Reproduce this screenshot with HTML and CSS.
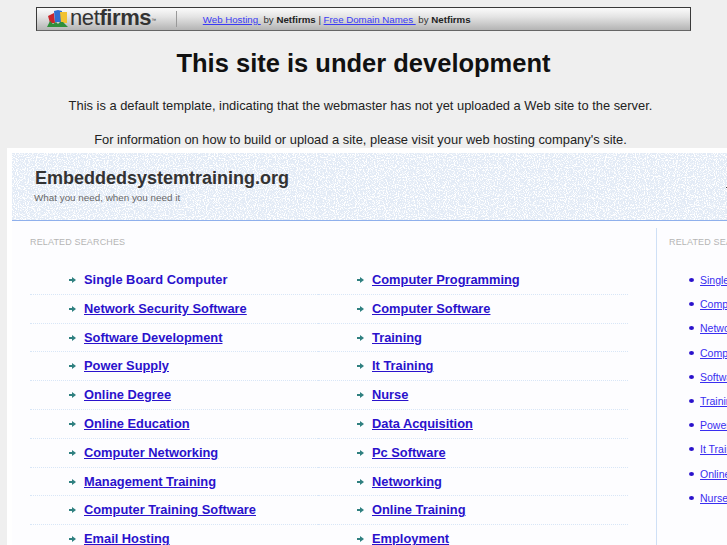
FILE: index.html
```html
<!DOCTYPE html>
<html lang="en">
<head>
<meta charset="utf-8">
<title>Embeddedsystemtraining.org</title>
<link rel="stylesheet" href="styles.css">
</head>
<body>
<div class="topbar">
  <div class="logo">
    <svg class="logo-mark" width="22" height="18" viewBox="0 0 22 18" aria-hidden="true">
      <path d="M1 6 L7 3 L8 13 L3 13 Z" fill="#c8262c"/>
      <path d="M7 1 L11 0 L15 1 L14 12 L8 12 Z" fill="#2f6fd0"/>
      <path d="M13 2 L20 2 L20 13 L14 13 Z" fill="#f2c230"/>
      <path d="M0 17 L3 11 L6 14 L9 12 L11 14 L13 12 L16 12 L21 17 Z" fill="#2f8f3a"/>
    </svg>
    <span class="logo-net">net</span><span class="logo-firms">firms</span><span class="logo-tm">™</span>
  </div>
  <div class="topbar-sep"></div>
  <div class="topbar-links">
    <a href="#">Web Hosting </a> by <b>Netfirms</b> | <a href="#">Free Domain Names </a> by <b>Netfirms</b>
  </div>
</div>
<h1 class="title">This site is under development</h1>
<p class="intro intro-first">This is a default template, indicating that the webmaster has not yet uploaded a Web site to the server.</p>
<p class="intro intro-second">For information on how to build or upload a site, please visit your web hosting company's site.</p>

<div class="panel">
  <header class="panel-head">
    <svg class="speckle" aria-hidden="true">
      <filter id="speckle-noise" x="0" y="0" width="100%" height="100%" color-interpolation-filters="sRGB">
        <feTurbulence type="fractalNoise" baseFrequency="0.9" numOctaves="1" seed="4"/>
        <feColorMatrix values="0 0 0 0 1  0 0 0 0 1  0 0 0 0 1  10 0 0 0 -5"/>
      </filter>
      <rect width="100%" height="100%" filter="url(#speckle-noise)"/>
    </svg>
    <div class="domain">Embeddedsystemtraining.org</div>
    <div class="tagline">What you need, when you need it</div>
    <span class="head-mark"></span>
  </header>
  <div class="panel-body">
    <section class="main-col">
      <h2 class="section-label">RELATED SEARCHES</h2>
      <ul class="link-grid">
        <li><a href="#" class="plain">Single Board Computer</a></li>
        <li><a href="#">Computer Programming</a></li>
        <li><a href="#">Network Security Software</a></li>
        <li><a href="#">Computer Software</a></li>
        <li><a href="#">Software Development</a></li>
        <li><a href="#">Training</a></li>
        <li><a href="#">Power Supply</a></li>
        <li><a href="#">It Training</a></li>
        <li><a href="#">Online Degree</a></li>
        <li><a href="#">Nurse</a></li>
        <li><a href="#">Online Education</a></li>
        <li><a href="#">Data Acquisition</a></li>
        <li><a href="#">Computer Networking</a></li>
        <li><a href="#">Pc Software</a></li>
        <li><a href="#">Management Training</a></li>
        <li><a href="#">Networking</a></li>
        <li><a href="#">Computer Training Software</a></li>
        <li><a href="#">Online Training</a></li>
        <li><a href="#">Email Hosting</a></li>
        <li><a href="#">Employment</a></li>
      </ul>
    </section>
    <aside class="side-col">
      <h2 class="section-label">RELATED SEARCHES</h2>
      <ul class="side-list">
        <li><a href="#">Single Board Computer</a></li>
        <li><a href="#">Computer Programming</a></li>
        <li><a href="#">Network Security</a></li>
        <li><a href="#">Computer Software</a></li>
        <li><a href="#">Software Development</a></li>
        <li><a href="#">Training</a></li>
        <li><a href="#">Power Supply</a></li>
        <li><a href="#">It Training</a></li>
        <li><a href="#">Online Degree</a></li>
        <li><a href="#">Nurse</a></li>
      </ul>
    </aside>
  </div>
</div>
</body>
</html>
```
FILE: styles.css
```css
* { box-sizing: border-box; }
html, body { margin: 0; padding: 0; height: 545px; overflow: hidden; }
body {
  width: 727px;
  background: #efefef;
  font-family: "Liberation Sans", Arial, sans-serif;
  color: #222;
  padding-top: 7px;
}
a { color: #3a2ef0; }

.topbar {
  display: flex;
  align-items: center;
  width: 655px;
  height: 24px;
  margin-left: 36px;
  border: 1px solid #3a3a3a;
  border-bottom-color: #666;
  background: linear-gradient(#fbfbfb, #e4e4e4 40%, #b4b4b4);
  overflow: hidden;
}
.logo {
  display: flex;
  align-items: baseline;
  width: 139px;
  padding-left: 10px;
  font-size: 22px;
  line-height: 22px;
  color: #333;
  letter-spacing: -0.4px;
}
.logo-mark { align-self: center; margin-right: 1px; flex: none; }
.logo-net { font-weight: 400; }
.logo-firms { font-weight: 700; }
.logo-tm { font-size: 5px; align-self: flex-start; margin-top: 2px; }
.topbar-sep { width: 1px; height: 16px; background: #999; flex: none; }
.topbar-links { margin-left: 15px; font-size: 9.7px; white-space: pre; color: #333; }
.topbar-links a { color: #3a3af5; }
.topbar-links b { color: #222; }

.title {
  margin: 17px 0 0;
  width: 727px;
  text-align: center;
  font-size: 25.5px;
  line-height: 30px;
  font-weight: 700;
  color: #111;
}
.intro {
  margin: 0;
  width: 721px;
  text-align: center;
  font-size: 12.9px;
  line-height: 16px;
  color: #222;
}
.intro-first { margin-top: 20px; }
.intro-second { margin-top: 18px; }

.panel {
  width: 800px;
  height: 400px;
  margin-left: 7px;
  background: #fff;
  padding: 5px 0 0 5px;
}
.panel-head {
  position: relative;
  height: 68px;
  padding: 14px 0 0 23px;
  border-bottom: 1px solid #8fb0ec;
  background-color: #e3ebf6;
}
.speckle {
  position: absolute;
  left: 0;
  top: 0;
  width: 100%;
  height: 100%;
}
.head-mark {
  position: absolute;
  left: 714px;
  top: 34px;
  width: 2px;
  height: 1px;
  background: #444;
}
.domain { position: relative; font-size: 18px; line-height: 22px; font-weight: 700; color: #333; }
.tagline { position: relative; margin-top: 3px; font-size: 9.85px; line-height: 12px; color: #666; margin-left: -1px; }

.panel-body { display: flex; background: #fdfdff; height: 330px; }
.main-col {
  width: 645px;
  flex: none;
  margin-top: 7px;
  padding: 8px 28px 0 18px;
  border-right: 1px solid #cfe0f6;
}
.section-label {
  margin: 0;
  font-size: 9px;
  line-height: 12px;
  font-weight: 400;
  letter-spacing: 0.15px;
  color: #b5b5b5;
}
.link-grid {
  list-style: none;
  margin: 18px 0 0;
  padding: 0;
  display: grid;
  grid-template-columns: 288px 310px;
}
.link-grid li {
  height: 28.8px;
  padding-left: 54px;
  line-height: 28px;
  font-size: 12.85px;
  font-weight: 700;
  white-space: nowrap;
  border-bottom: 1px dotted #d8e6f7;
  position: relative;
}
.link-grid li::before {
  content: "";
  position: absolute;
  left: 39px;
  top: 13px;
  width: 4px;
  height: 2px;
  background: #2f8080;
}
.link-grid li::after {
  content: "";
  position: absolute;
  left: 42px;
  top: 11px;
  border-left: 4px solid #2f8080;
  border-top: 3px solid transparent;
  border-bottom: 3px solid transparent;
}
.link-grid a { color: #2a12cc; }
.link-grid a.plain { text-decoration: none; }

.side-col { padding: 15px 0 0 12px; white-space: nowrap; }
.side-list { list-style: none; margin: 20px 0 0; padding: 0 0 0 31px; }
.side-list li {
  height: 24.2px;
  line-height: 24px;
  font-size: 10.5px;
  position: relative;
}
.side-list li::before {
  content: "";
  position: absolute;
  left: -11px;
  top: 10px;
  width: 5px;
  height: 4px;
  border-radius: 50%;
  background: #2a12cc;
}
.side-list a { color: #3a2ef0; }
```
